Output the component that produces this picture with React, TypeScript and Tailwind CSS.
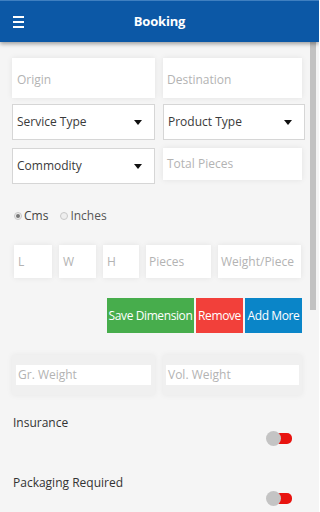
import { ReactNode } from 'react'

function ShadowBox({ className, children }: { className?: string; children?: ReactNode }) {
  return (
    <div className={`bg-white shadow-[0_0_6px_rgba(0,0,0,0.08)] flex items-center ${className ?? ''}`}>
      {children}
    </div>
  )
}

function Placeholder({ children }: { children: ReactNode }) {
  return <span className="text-[12px] text-[#b3b3b3] leading-none">{children}</span>
}

function Select({ label, className }: { label: string; className?: string }) {
  return (
    <div className={`h-[36px] bg-white border border-[#d6d6d6] flex items-center justify-between pl-[4px] pr-[12px] ${className ?? ''}`}>
      <span className="text-[12px] text-[#3a3a3a] leading-none">{label}</span>
      <svg width="8" height="5" viewBox="0 0 8 5"><path d="M0 0h8L4 5z" fill="#111" /></svg>
    </div>
  )
}

function Toggle() {
  return (
    <div className="flex items-center">
      <div className="w-[15px] h-[15px] rounded-full bg-[#c4c4c4] z-10" />
      <div className="w-[14px] h-[11px] -ml-[3px] bg-[#e8130f] rounded-r-[5px]" />
    </div>
  )
}

function Radio({ checked }: { checked?: boolean }) {
  return (
    <span className="w-[8px] h-[8px] rounded-full border border-[#c8c8c8] bg-[#eee] flex items-center justify-center">
      {checked && <span className="w-[4px] h-[4px] rounded-full bg-[#777]" />}
    </span>
  )
}

export default function App() {
  return (
    <div className="w-[319px] h-[512px] overflow-hidden bg-[#f5f5f5] flex flex-col" style={{ fontFamily: '"Open Sans", "Noto Sans", sans-serif' }}>
      <header className="h-[42px] bg-[#0c58a6] border-t border-[#3f7fc0] flex items-center relative z-20 shadow-[0_2px_4px_rgba(0,0,0,0.35)] shrink-0">
        <div className="w-[37px] pl-[13px] flex flex-col gap-[3px]">
          <span className="block w-[11px] h-[2px] bg-white" />
          <span className="block w-[11px] h-[2px] bg-white" />
          <span className="block w-[11px] h-[2px] bg-white" />
        </div>
        <h1 className="flex-1 text-center pr-[37px] text-white font-bold text-[13px] tracking-[-0.2px]">Booking</h1>
      </header>

      <div className="flex flex-1 min-h-0">
        <main className="flex-1 pl-[12px] pr-[4px] pt-[16px] flex flex-col">
          <div className="flex gap-[8px]">
            <ShadowBox className="w-[143px] h-[40px] pl-[5px] pt-[4px]"><Placeholder>Origin</Placeholder></ShadowBox>
            <ShadowBox className="w-[139px] h-[40px] pl-[4px] pt-[4px]"><Placeholder>Destination</Placeholder></ShadowBox>
          </div>
          <div className="flex gap-[8px] mt-[6px]">
            <Select label="Service Type" className="w-[143px]" />
            <Select label="Product Type" className="w-[142px]" />
          </div>
          <div className="flex gap-[8px] mt-[8px]">
            <Select label="Commodity" className="w-[143px]" />
            <ShadowBox className="w-[139px] h-[32px] pl-[4px]"><Placeholder>Total Pieces</Placeholder></ShadowBox>
          </div>

          <div className="flex items-center mt-[26px] h-[12px] text-[12px] text-[#444] leading-none">
            <span className="ml-[2px] mr-[2px]"><Radio checked /></span>
            <span>Cms</span>
            <span className="ml-[12px] mr-[2px]"><Radio /></span>
            <span className="text-[#555]">Inches</span>
          </div>

          <div className="flex gap-[7px] mt-[23px] pl-[2px]">
            <ShadowBox className="w-[38px] h-[33px] pl-[4px]"><Placeholder>L</Placeholder></ShadowBox>
            <ShadowBox className="w-[37px] h-[33px] pl-[4px]"><Placeholder>W</Placeholder></ShadowBox>
            <ShadowBox className="w-[36px] h-[33px] pl-[4px]"><Placeholder>H</Placeholder></ShadowBox>
            <ShadowBox className="w-[65px] h-[33px] pl-[3px]"><Placeholder>Pieces</Placeholder></ShadowBox>
            <ShadowBox className="w-[83px] h-[33px] pl-[3px]"><Placeholder>Weight/Piece</Placeholder></ShadowBox>
          </div>

          <div className="flex justify-end gap-[2px] mt-[20px] pr-[3px] text-white text-[12px] tracking-[-0.4px] leading-none">
            <button className="w-[87px] h-[35px] bg-[#47ad4c]">Save Dimension</button>
            <button className="w-[47px] h-[35px] bg-[#f2403a]">Remove</button>
            <button className="w-[57px] h-[35px] bg-[#0a85c8]">Add More</button>
          </div>

          <div className="flex gap-[8px] mt-[22px]">
            <div className="w-[143px] h-[40px] bg-[#f0f0f0] shadow-[0_0_6px_rgba(0,0,0,0.06)] px-[4px] flex items-center">
              <div className="w-full h-[20px] bg-white flex items-center pl-[2px]"><Placeholder>Gr. Weight</Placeholder></div>
            </div>
            <div className="w-[139px] h-[40px] bg-[#f0f0f0] shadow-[0_0_6px_rgba(0,0,0,0.06)] px-[3px] flex items-center">
              <div className="w-full h-[20px] bg-white flex items-center pl-[2px]"><Placeholder>Vol. Weight</Placeholder></div>
            </div>
          </div>

          <div className="mt-[22px] pl-[1px] text-[12px] text-[#333] leading-none">Insurance</div>
          <div className="flex justify-end pr-[13px] mt-[2px]"><Toggle /></div>

          <div className="mt-[31px] pl-[1px] text-[12px] text-[#333] leading-none">Packaging Required</div>
          <div className="flex justify-end pr-[13px] mt-[2px]"><Toggle /></div>
        </main>

        <aside className="w-[13px] shrink-0 pl-[1px]">
          <div className="w-[6px] h-[268px] bg-[#c2c2c2]" />
        </aside>
      </div>
    </div>
  )
}
